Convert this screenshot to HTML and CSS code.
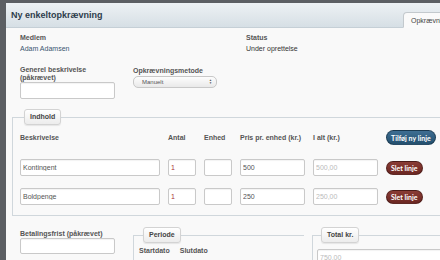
FILE: index.html
```html
<!DOCTYPE html>
<html lang="da">
<head>
    <meta charset="UTF-8">
    <title>Ny enkeltopkrævning</title>
    <link rel="stylesheet" href="styles.css">
</head>
<body>
    <div class="vindue">
        <div class="top">
            <h1 class="titel">Ny enkeltopkrævning</h1>
            <div class="fane">Opkrævninger</div>
        </div>

        <div class="indhold">
            <div class="raekke info">
                <div class="felt bred">
                    <div class="label">Medlem</div>
                    <div class="vaerdi">Adam Adamsen</div>
                </div>
                <div class="felt">
                    <div class="label">Status</div>
                    <div class="vaerdi moerk">Under oprettelse</div>
                </div>
            </div>

            <div class="raekke generelt">
                <div class="felt smal">
                    <div class="label">Generel beskrivelse<br>(påkrævet)</div>
                    <input class="input beskr" type="text">
                </div>
                <div class="felt metode">
                    <div class="label">Opkrævningsmetode</div>
                    <div class="vaelg">Manuelt<span class="pile">&#9650;<br>&#9660;</span></div>
                </div>
            </div>

            <fieldset class="gruppe linjer">
                <legend class="legende">Indhold</legend>
                <div class="tabel">
                    <div class="label">Beskrivelse</div>
                    <div class="label">Antal</div>
                    <div class="label">Enhed</div>
                    <div class="label">Pris pr. enhed (kr.)</div>
                    <div class="label">I alt (kr.)</div>
                    <div><button class="knap blaa">Tilføj ny linje</button></div>

                    <input class="input" type="text" value="Kontingent">
                    <input class="input roed-tal" type="text" value="1">
                    <input class="input" type="text">
                    <input class="input" type="text" value="500">
                    <input class="input laast" type="text" value="500,00" disabled>
                    <div><button class="knap roed">Slet linje</button></div>

                    <input class="input" type="text" value="Boldpenge">
                    <input class="input roed-tal" type="text" value="1">
                    <input class="input" type="text">
                    <input class="input" type="text" value="250">
                    <input class="input laast" type="text" value="250,00" disabled>
                    <div><button class="knap roed">Slet linje</button></div>
                </div>
            </fieldset>

            <div class="raekke bund">
                <div class="felt smal">
                    <div class="label">Betalingsfrist (påkrævet)</div>
                    <input class="input beskr" type="text">
                </div>
                <fieldset class="gruppe periode">
                    <legend class="legende">Periode</legend>
                    <div class="datoer">
                        <div class="label">Startdato</div>
                        <div class="label">Slutdato</div>
                    </div>
                </fieldset>
                <fieldset class="gruppe total">
                    <legend class="legende">Total kr.</legend>
                    <input class="input laast stor" type="text" value="750,00" disabled>
                </fieldset>
            </div>
        </div>
    </div>
</body>
</html>
```

FILE: styles.css
```css
body {
    margin: 0;
    background-color: #5c5f63;
    font-family: 'Liberation Sans', Arial, sans-serif;
    font-size: 7px;
    color: #333;
    overflow: hidden;
    height: 260px;
}

.vindue {
    margin: 3px 0 0 6px;
    width: 640px;
    height: 300px;
    background-color: #f9f9f9;
}

.top {
    display: flex;
    justify-content: space-between;
    align-items: flex-end;
    height: 24px;
    background: linear-gradient(#edf1f4, #d6dfe5);
    border-bottom: 1px solid #c5cfd6;
}

.titel {
    margin: 0 0 0 5px;
    font-size: 9px;
    font-weight: bold;
    color: #2e3d4c;
    align-self: center;
}

.fane {
    margin-right: 114px;
    margin-bottom: -1px;
    width: 120px;
    height: 14px;
    line-height: 15px;
    padding-left: 7px;
    background-color: #fafafa;
    border: 1px solid #c3c9cd;
    border-bottom-color: #fafafa;
    border-radius: 4px 4px 0 0;
    color: #444;
    font-size: 7px;
}

.indhold {
    padding: 6px 0 0 14px;
}

.raekke {
    display: flex;
}

.label {
    font-weight: bold;
    color: #555;
    line-height: 8px;
}

.vaerdi {
    margin-top: 3px;
    color: #3a5570;
}

.vaerdi.moerk {
    color: #333;
}

.felt.bred {
    width: 226px;
}

.felt.smal {
    width: 113px;
}

.generelt {
    margin-top: 14px;
}

.felt.metode {
    padding-top: 1px;
}

.input {
    box-sizing: border-box;
    height: 17px;
    margin: 0;
    padding: 0 2px;
    border: 1px solid #c9c9c9;
    border-radius: 2px;
    background-color: #fff;
    font-family: inherit;
    font-size: 7px;
    color: #555;
    box-shadow: inset 0 1px 1px rgba(0,0,0,0.05);
}

.input.beskr {
    width: 95px;
}

.input.laast {
    color: #bbb;
    background-color: #fff;
}

.input.roed-tal {
    color: #a33;
}

.vaelg {
    position: relative;
    box-sizing: border-box;
    width: 84px;
    height: 12px;
    margin-top: 1px;
    padding-left: 8px;
    line-height: 11px;
    font-size: 6px;
    color: #555;
    border: 1px solid #c8c8c8;
    border-radius: 5px;
    background: linear-gradient(#fdfdfd, #e9e9e9);
}

.pile {
    position: absolute;
    right: 4px;
    top: 2px;
    font-size: 3px;
    line-height: 3px;
    color: #555;
}

.gruppe {
    margin: 0;
    padding: 0;
    border: 1px solid #d0d7dc;
    border-right: none;
    min-width: 0;
}

.legende {
    margin-left: 4px;
    padding: 3px 5px;
    font-weight: bold;
    color: #444;
    line-height: 8px;
    border: 1px solid #d3d3d3;
    border-radius: 3px;
    background: linear-gradient(#ffffff, #ececec);
    box-shadow: 0 1px 1px rgba(0,0,0,0.08);
}

.linjer {
    margin: 10px 0 0 -8px;
    padding: 3px 0 10px 7px;
}

.tabel {
    display: grid;
    grid-template-columns: 140px 28px 28px 65px 65px 60px;
    column-gap: 8px;
    grid-template-rows: 19px 17px 17px;
    row-gap: 12px;
    align-items: center;
}

.knap {
    font-family: 'Lato', sans-serif;
    font-size: 7px;
    font-weight: bold;
    color: #fff;
    border: 1px solid rgba(0,0,0,0.3);
    border-radius: 8px;
    padding: 0 4px;
    cursor: pointer;
}

.knap.blaa {
    height: 15px;
    background: linear-gradient(#3e6e93, #24506f);
}

.knap.roed {
    height: 14px;
    background: linear-gradient(#8a3c35, #6c2722);
}

.bund {
    margin-top: 10px;
    align-items: flex-start;
}

.bund .felt.smal {
    padding-top: 4px;
}

.bund .input.beskr {
    height: 16px;
}

.periode {
    width: 165px;
    margin-top: 1px;
    padding: 4px 0 20px 5px;
    border-bottom: none;
}

.datoer {
    display: flex;
    gap: 10px;
}

.total {
    flex: 1;
    margin: 1px 0 0 8px;
    padding: 6px 0 0 4px;
}

.input.stor {
    width: 140px;
}
```
